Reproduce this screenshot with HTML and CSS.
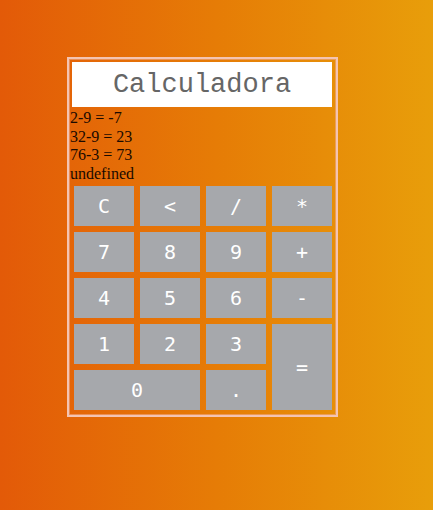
FILE: index.html
```html
<!DOCTYPE html>
<html lang="es">
<head>
<meta charset="utf-8">
<title>Calculadora</title>
<link rel="stylesheet" href="styles.css">
</head>
<body>
<div class="calc">
  <div class="display">Calculadora</div>
  <div class="history">
    <div>2-9 = -7</div>
    <div>32-9 = 23</div>
    <div>76-3 = 73</div>
    <div>undefined</div>
  </div>
  <div class="keys">
    <button class="key">C</button>
    <button class="key">&lt;</button>
    <button class="key">/</button>
    <button class="key">*</button>
    <button class="key">7</button>
    <button class="key">8</button>
    <button class="key">9</button>
    <button class="key">+</button>
    <button class="key">4</button>
    <button class="key">5</button>
    <button class="key">6</button>
    <button class="key">-</button>
    <button class="key">1</button>
    <button class="key">2</button>
    <button class="key">3</button>
    <button class="key equals">=</button>
    <button class="key zero">0</button>
    <button class="key">.</button>
  </div>
</div>
</body>
</html>
```
FILE: styles.css
```css
html, body {
  margin: 0;
  padding: 0;
}
body {
  min-height: 100vh;
  background: linear-gradient(to right, #e35a08, #e67c06, #e89e0a);
  font-family: "Liberation Serif", serif;
  font-size: 16px;
  padding: 57px 0 0 67px;
  box-sizing: border-box;
}
.calc {
  width: 271px;
  box-sizing: border-box;
  border: 2px solid #f4c4b2;
  box-shadow: inset 0 0 0 1px rgba(240, 170, 140, 0.6);
  padding: 3px 1px 5px 1px;
}
.display {
  margin: 0 0 0 2px;
  width: 260px;
  height: 45px;
  background: #ffffff;
  color: #666666;
  font-family: "Liberation Mono", monospace;
  font-size: 27px;
  display: flex;
  align-items: center;
  justify-content: center;
}
.history {
  color: #1a0a00;
  line-height: 18.5px;
  padding-top: 2px;
}
.keys {
  display: grid;
  grid-template-columns: repeat(4, 60px);
  grid-auto-rows: 40px;
  gap: 6px;
  margin: 3px 0 0 4px;
}
.key {
  border: none;
  margin: 0;
  padding: 0;
  background: #a6a8ac;
  color: #ffffff;
  font-family: "DejaVu Sans Mono", monospace;
  font-size: 20px;
}
.equals {
  grid-column: 4;
  grid-row: 4 / span 2;
}
.zero {
  grid-column: 1 / span 2;
}
```
